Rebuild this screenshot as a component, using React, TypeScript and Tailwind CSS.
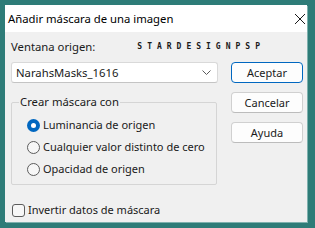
import React from "react";

const font = { fontFamily: '"Noto Sans", "Open Sans", sans-serif' };

function Radio({ label, checked }: { label: string; checked?: boolean }) {
  return (
    <div className="flex items-center h-[22px]">
      {checked ? (
        <span className="shrink-0 w-[13px] h-[13px] rounded-full bg-[#0067c0] flex items-center justify-center">
          <span className="w-[5px] h-[5px] rounded-full bg-white" />
        </span>
      ) : (
        <span className="shrink-0 w-[13px] h-[13px] rounded-full border border-[#5c5c5c] bg-[#f7f7f7]" />
      )}
      <span className="ml-[3px] whitespace-nowrap text-[11px] leading-[16px] text-[#1a1a1a]">{label}</span>
    </div>
  );
}

function Button({ label, primary }: { label: string; primary?: boolean }) {
  return (
    <button
      type="button"
      className={
        "w-[72px] h-[21px] rounded-[4px] bg-[#fdfdfd] text-[11px] leading-[16px] text-[#1a1a1a] flex items-center justify-center " +
        (primary ? "border-[1.5px] border-[#0067c0]" : "border border-[#d0d0d0] border-b-[#bcbcbc]")
      }
    >
      {label}
    </button>
  );
}

export default function App() {
  return (
    <div className="w-[315px] h-[228px] bg-[#2e7c78] pt-[5px] pl-[5px] pr-[8px] pb-[6px]" style={font}>
      <div className="w-full h-full flex flex-col bg-[#f0f0f0] shadow-[1px_1px_0_#7fb1ae]">
        <div className="h-[27px] bg-white flex items-center justify-between pl-[3px] pr-[1px]">
          <span className="whitespace-nowrap text-[11.3px] leading-[16px] text-black">Añadir máscara de una imagen</span>
          <svg width="12" height="12" viewBox="0 0 12 12">
            <path d="M1 1 L11 11 M11 1 L1 11" stroke="#1a1a1a" strokeWidth="1" />
          </svg>
        </div>
        <div className="flex-1 flex pl-[6px] pr-[4px] pt-[7px]">
          <div className="w-[207px] flex flex-col">
            <div className="flex items-center h-[16px]">
              <span className="whitespace-nowrap text-[11.3px] leading-[16px] text-[#1a1a1a]">Ventana origen:</span>
              <span
                className="ml-[42px] whitespace-nowrap text-[8px] leading-[8px] font-bold tracking-[5px] text-[#1a1a1a]"
                style={{ fontFamily: '"DejaVu Sans Mono", monospace' }}
              >
                STARDESIGNPSP
              </span>
            </div>
            <div className="mt-[7px] h-[21px] bg-white border border-[#d9d9d9] border-b-[#c4c4c4] rounded-[3px] flex items-center justify-between pl-[4px] pr-[6px]">
              <span className="whitespace-nowrap text-[11.3px] leading-[16px] text-[#1a1a1a]">NarahsMasks_1616</span>
              <svg width="9" height="6" viewBox="0 0 9 6">
                <path d="M0.5 0.5 L4.5 4.5 L8.5 0.5" fill="none" stroke="#5a5a5a" strokeWidth="1" />
              </svg>
            </div>
            <div className="relative mt-[19px] w-[206px] h-[83px] border border-[#d5d5d5] rounded-[2px] pl-[15px] pt-[11px]">
              <span className="absolute left-[7px] top-[-9px] px-[1px] bg-[#f0f0f0] whitespace-nowrap text-[11.3px] leading-[16px] text-[#1a1a1a]">
                Crear máscara con
              </span>
              <Radio label="Luminancia de origen" checked />
              <Radio label="Cualquier valor distinto de cero" />
              <Radio label="Opacidad de origen" />
            </div>
            <div className="mt-[17px] flex items-center">
              <span className="shrink-0 w-[13px] h-[13px] rounded-[3px] border border-[#5c5c5c] bg-[#f7f7f7] ml-[1px]" />
              <span className="ml-[3px] whitespace-nowrap text-[11px] leading-[16px] text-[#1a1a1a]">Invertir datos de máscara</span>
            </div>
          </div>
          <div className="ml-auto flex flex-col gap-[9px] pt-[23px]">
            <Button label="Aceptar" primary />
            <Button label="Cancelar" />
            <Button label="Ayuda" />
          </div>
        </div>
      </div>
    </div>
  );
}
